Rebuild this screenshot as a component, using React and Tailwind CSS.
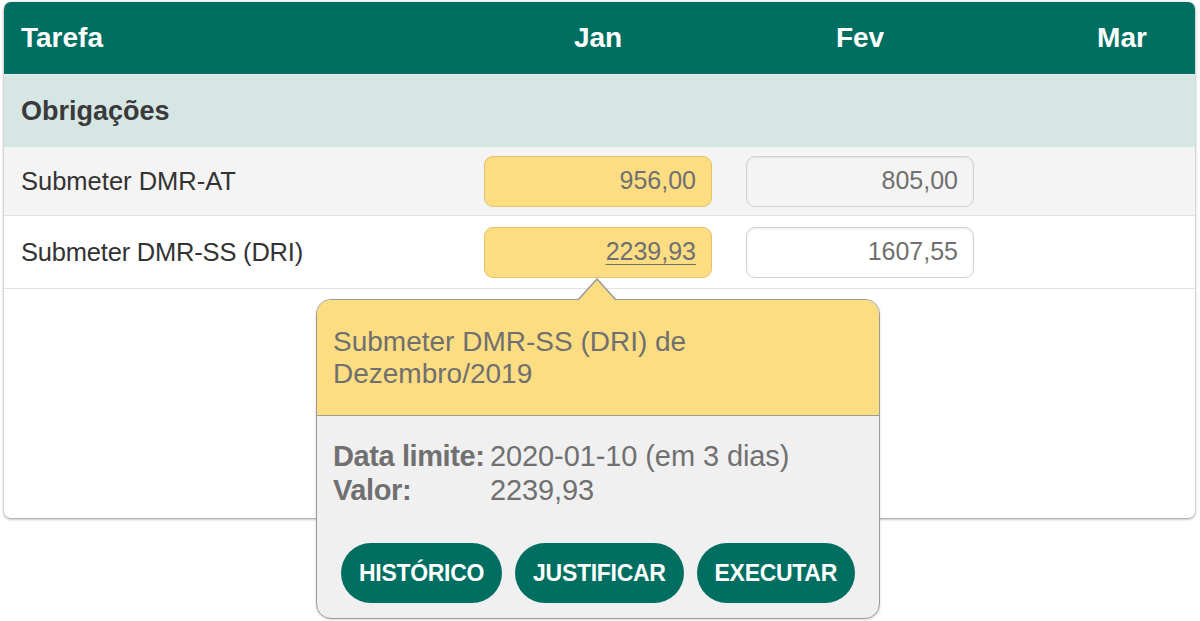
import React from "react";

const cols = "grid grid-cols-[463px_262px_262px_262px]";

const Cell = ({ value, variant, underline }) => {
  const styles = {
    yellow: "bg-[#fcdd82] border-[#e2c36b]",
    grey: "bg-[#f4f4f4] border-[#d2d2d2] shadow-[inset_0_1px_2px_rgba(0,0,0,0.08)]",
    white: "bg-white border-[#d2d2d2] shadow-[inset_0_1px_2px_rgba(0,0,0,0.08)]",
  };
  return (
    <div className="flex items-center justify-center">
      <div
        className={`w-[228px] h-[51px] rounded-[9px] border flex items-center justify-end pr-[15px] text-[25px] text-[#707070] ${styles[variant]}`}
      >
        <span className={underline ? "underline decoration-1 underline-offset-[4px]" : ""}>{value}</span>
      </div>
    </div>
  );
};

const PopButton = ({ children }) => (
  <button className="h-[60px] px-[18px] rounded-full bg-[#006f62] text-white text-[23px] font-bold tracking-[-0.3px]">
    {children}
  </button>
);

export default function App() {
  return (
    <div className="relative w-[1200px] h-[621px] bg-white font-['Liberation_Sans',Arial,sans-serif] overflow-hidden">
      <div className="pt-[2px] px-[4px]">
        <div className="w-[1191px] h-[516px] rounded-[7px] bg-white overflow-hidden shadow-[0_1px_3px_rgba(0,0,0,0.45)]">
          <div className="w-[1250px]">
            {/* header */}
            <div className={`${cols} h-[72px] bg-[#006f62] text-white text-[28px] font-bold items-center`}>
              <div className="pl-[17px]">Tarefa</div>
              <div className="text-center">Jan</div>
              <div className="text-center">Fev</div>
              <div className="text-center">Mar</div>
            </div>
            {/* group */}
            <div className="h-[73px] bg-[#d6e6e5] flex items-center pl-[17px] text-[27px] font-bold text-[#3a3a3a] border-t border-[#e4efee]">
              Obrigações
            </div>
            {/* rows */}
            <div className={`${cols} h-[69px] bg-[#f4f4f4] border-b border-[#e2e2e2] items-center`}>
              <div className="pl-[17px] text-[25.5px] text-[#333]">Submeter DMR-AT</div>
              <Cell value="956,00" variant="yellow" />
              <Cell value="805,00" variant="grey" />
              <div />
            </div>
            <div className={`${cols} h-[73px] bg-white border-b border-[#e2e2e2] items-center`}>
              <div className="pl-[17px] text-[25.5px] tracking-[-0.2px] text-[#333]">Submeter DMR-SS (DRI)</div>
              <Cell value="2239,93" variant="yellow" underline />
              <Cell value="1607,55" variant="white" />
              <div />
            </div>
          </div>
        </div>
      </div>

      {/* popover */}
      <div className="absolute left-[316px] top-[278px] w-[564px]">
        <svg className="absolute left-[261px] top-0" width="40" height="23" viewBox="0 0 40 23">
          <path d="M1 22 L20 1 L39 22" fill="#fcdd82" stroke="#9a9a9a" strokeWidth="1.5" />
        </svg>
        <div className="mt-[21px] rounded-[15px] border-[1.5px] border-[#9a9a9a] overflow-hidden bg-[#f0f0f0] shadow-[0_1px_3px_rgba(0,0,0,0.15)]">
          <div className="h-[116px] bg-[#fcdd82] border-b-[1.5px] border-[#9a9a9a] flex items-center px-[16px] text-[28px] leading-[32px] text-[#707070]">
            <div>
              Submeter DMR-SS (DRI) de
              <br />
              Dezembro/2019
            </div>
          </div>
          <div className="pt-[23px] pb-[15px]">
            <div className="px-[16px] text-[29px] leading-[34px] text-[#707070]">
              <div className="flex">
                <span className="w-[157px] font-bold tracking-[-0.4px]">Data limite:</span>
                <span className="tracking-[-0.1px]">2020-01-10 (em 3 dias)</span>
              </div>
              <div className="flex">
                <span className="w-[157px] font-bold tracking-[-0.4px]">Valor:</span>
                <span className="tracking-[-0.1px]">2239,93</span>
              </div>
            </div>
            <div className="flex justify-center gap-[13px] mt-[36px]">
              <PopButton>HISTÓRICO</PopButton>
              <PopButton>JUSTIFICAR</PopButton>
              <PopButton>EXECUTAR</PopButton>
            </div>
          </div>
        </div>
      </div>
    </div>
  );
}
